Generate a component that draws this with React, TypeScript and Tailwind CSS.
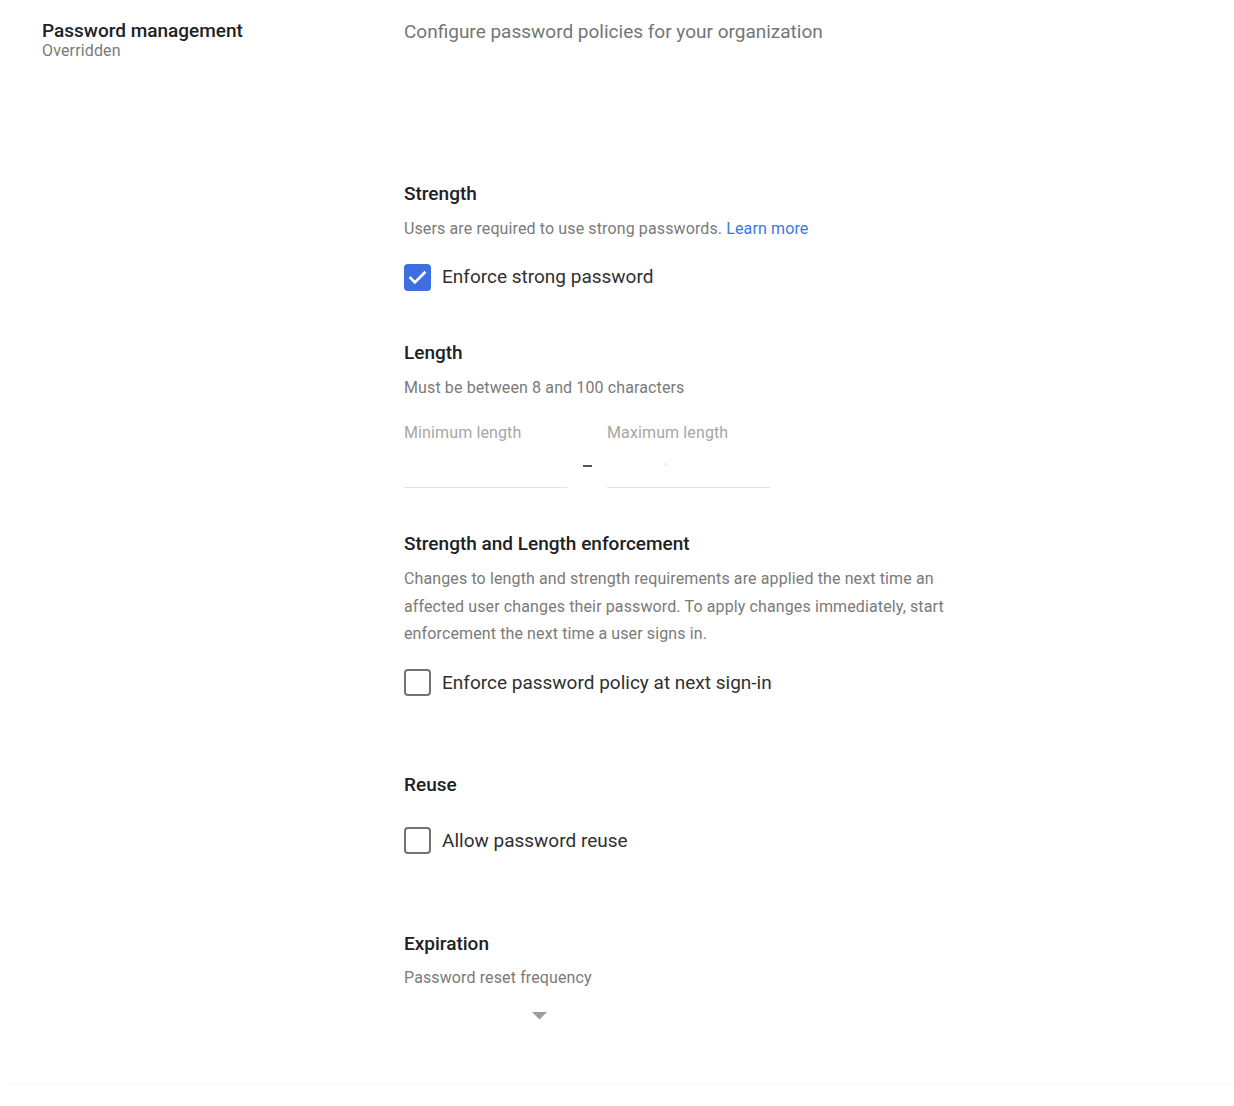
import React from "react";

const font = { fontFamily: "Roboto, 'Noto Sans', Arial, sans-serif" };

function Checkbox({ checked }: { checked: boolean }) {
  if (checked) {
    return (
      <div className="w-[27px] h-[27px] rounded-[4px] bg-[#3d6fe0] flex items-center justify-center shrink-0">
        <svg width="21" height="21" viewBox="0 0 24 24" fill="none">
          <path d="M4 12.5l5 5 11-11" stroke="#ffffff" strokeWidth="3" strokeLinecap="square" strokeLinejoin="miter" />
        </svg>
      </div>
    );
  }
  return <div className="w-[27px] h-[27px] rounded-[4px] border-2 border-[#727272] bg-white shrink-0" />;
}

export default function App() {
  return (
    <div className="w-[1234px] h-[1106px] bg-white overflow-hidden" style={font}>
      <div className="flex pl-[42px]">
        <div className="w-[362px] pt-[20px] shrink-0">
          <div className="text-[19px] leading-[22px] font-medium text-[#202124]">Password management</div>
          <div className="text-[16px] leading-[18px] tracking-[0.15px] text-[#7a7a7a]">Overridden</div>
        </div>
        <div className="pt-[21px] flex-1">
          <div className="text-[19px] leading-[22px] text-[#757575]">Configure password policies for your organization</div>

          <div className="mt-[139px] text-[19px] leading-[24px] font-medium text-[#202124]">Strength</div>
          <div className="mt-[13px] text-[16px] leading-[20px] tracking-[0.12px] text-[#7a7a7a]">
            Users are required to use strong passwords. <span className="text-[#3b78e7]">Learn more</span>
          </div>
          <div className="mt-[24px] flex items-center gap-[11px] h-[28px]">
            <Checkbox checked />
            <span className="text-[19px] leading-[24px] text-[#303030]">Enforce strong password</span>
          </div>

          <div className="mt-[50px] text-[19px] leading-[24px] font-medium text-[#202124]">Length</div>
          <div className="mt-[13px] text-[16px] leading-[20px] tracking-[0.12px] text-[#7a7a7a]">Must be between 8 and 100 characters</div>
          <div className="mt-[25px] flex items-start">
            <div className="w-[163px]">
              <div className="text-[16px] leading-[20px] tracking-[0.12px] text-[#a6a6a6]">Minimum length</div>
              <div className="h-[45px] border-b border-[#e2e2e2]" />
            </div>
            <div className="w-[40px] flex justify-center pt-[42px]">
              <div className="w-[9px] h-[1.5px] bg-[#555555]" />
            </div>
            <div className="w-[163px]">
              <div className="text-[16px] leading-[20px] tracking-[0.12px] text-[#a6a6a6]">Maximum length</div>
              <div className="h-[45px] border-b border-[#e2e2e2] pl-[58px] pt-[20px]">
                <div className="w-px h-[3px] bg-[#d8d8d8]" />
              </div>
            </div>
          </div>

          <div className="mt-[44px] text-[19px] leading-[24px] font-medium text-[#202124]">Strength and Length enforcement</div>
          <div className="mt-[9px] w-[560px] text-[16px] leading-[27.5px] tracking-[0.12px] text-[#7a7a7a]">
            Changes to length and strength requirements are applied the next time an affected user changes their password. To apply changes immediately, start enforcement the next time a user signs in.
          </div>
          <div className="mt-[21px] flex items-center gap-[11px] h-[28px]">
            <Checkbox checked={false} />
            <span className="text-[19px] leading-[24px] text-[#303030]">Enforce password policy at next sign-in</span>
          </div>

          <div className="mt-[76px] text-[19px] leading-[24px] font-medium text-[#202124]">Reuse</div>
          <div className="mt-[30px] flex items-center gap-[11px] h-[28px]">
            <Checkbox checked={false} />
            <span className="text-[19px] leading-[24px] text-[#303030]">Allow password reuse</span>
          </div>

          <div className="mt-[77px] text-[19px] leading-[24px] font-medium text-[#202124]">Expiration</div>
          <div className="mt-[12px] text-[16px] leading-[20px] tracking-[0.12px] text-[#7a7a7a]">Password reset frequency</div>
          <div className="mt-[24px] w-[151px] flex justify-end pr-[8px]">
            <svg width="15" height="8" viewBox="0 0 15 8">
              <path d="M0 0 L15 0 L7.5 7.5 Z" fill="#9e9e9e" />
            </svg>
          </div>
        </div>
      </div>
      <div className="mt-[63px] ml-[8px] border-t border-[#f7f7f7]" />
    </div>
  );
}
